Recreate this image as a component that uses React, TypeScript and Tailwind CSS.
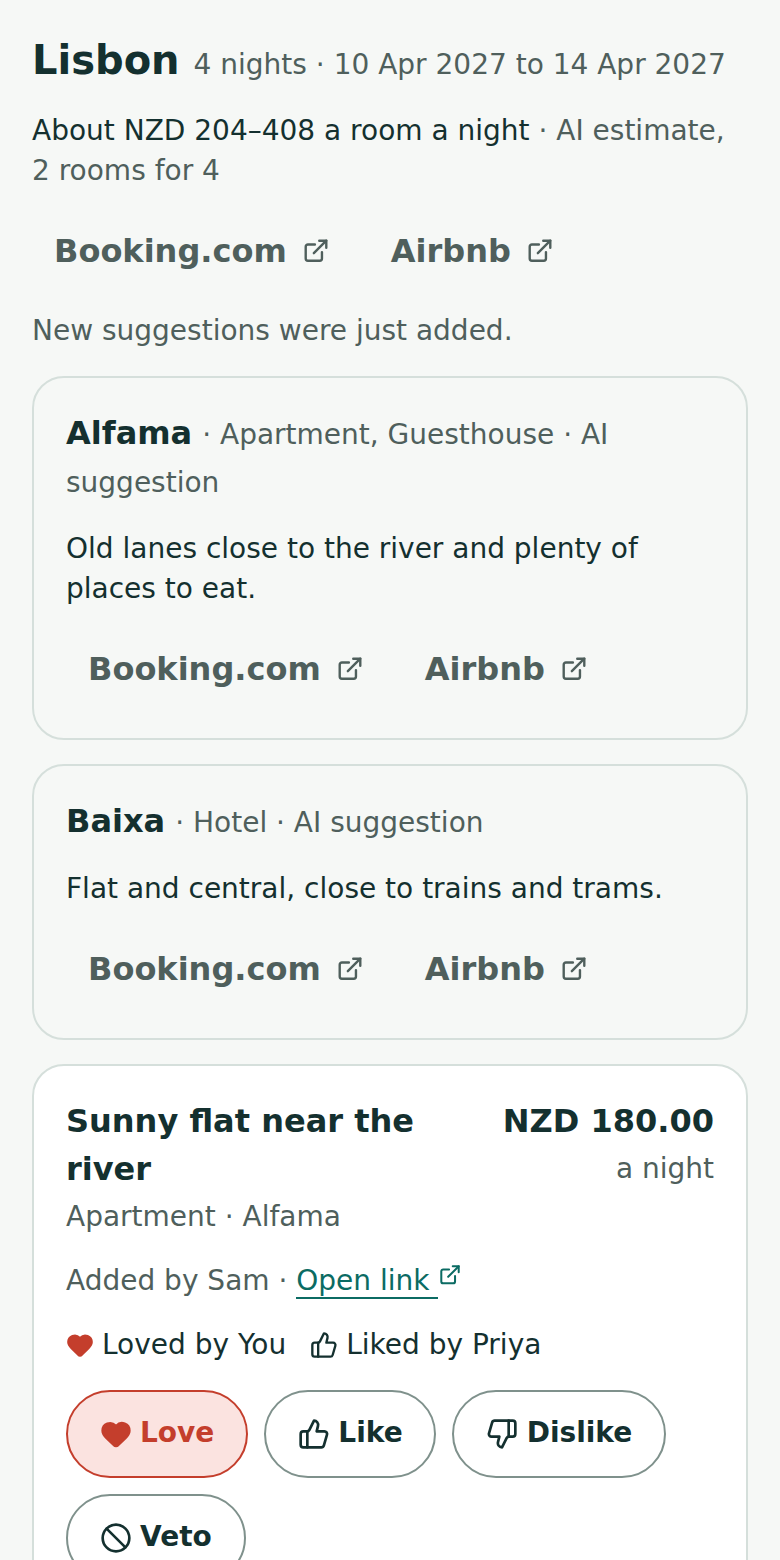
import { Ban, Heart, ThumbsDown, ThumbsUp } from 'lucide-react'

function ExternalIcon({ className }: { className: string }): JSX.Element {
  return (
    <svg className={className} viewBox="0 0 24 24" fill="none" stroke="currentColor" strokeWidth={2.2} strokeLinecap="round" strokeLinejoin="round">
      <path d="M17.5 13v6a2 2 0 0 1-2 2h-11a2 2 0 0 1-2-2V8a2 2 0 0 1 2-2H11" />
      <path d="M15 2.5h6.5V9" />
      <path d="M10 14 21.5 2.5" />
    </svg>
  )
}

function BookingLinks(): JSX.Element {
  return (
    <div className="flex gap-[18px]">
      <a className="flex items-center gap-[16px] h-[60px] px-[22px] text-[32px] font-bold text-[#4f5f5c]">
        Booking.com
        <ExternalIcon className="w-[26px] h-[26px]" />
      </a>
      <a className="flex items-center gap-[16px] h-[60px] px-[22px] text-[32px] font-bold text-[#4f5f5c]">
        Airbnb
        <ExternalIcon className="w-[26px] h-[26px]" />
      </a>
    </div>
  )
}

function Suggestion({ name, meta, text }: { name: string; meta: string; text: string }): JSX.Element {
  return (
    <div className="border-2 border-[#d5dfdb] rounded-[32px] px-[32px] pt-[31px] pb-[39px]">
      <p className="text-[28px] leading-[48px] text-[#4f5f5c]">
        <span className="text-[32px] font-bold text-[#14302f] mr-[10px]">{name}</span>
        {meta}
      </p>
      <p className="mt-[22px] text-[28px] leading-[40px] text-[#14302f]">{text}</p>
      <div className="mt-[30px]">
        <BookingLinks />
      </div>
    </div>
  )
}

export default function App(): JSX.Element {
  return (
    <div className="h-[1560px] overflow-hidden bg-[#f6f8f6] px-[32px] pt-[32px] font-['DejaVu_Sans',sans-serif]">
      <div className="flex items-baseline gap-[14px]">
        <h1 className="text-[40px] leading-[56px] font-bold text-[#14302f]">Lisbon</h1>
        <span className="text-[28px] text-[#4f5f5c]">4 nights · 10 Apr 2027 to 14 Apr 2027</span>
      </div>
      <p className="mt-[23px] text-[28px] leading-[40px] text-[#4f5f5c]">
        <span className="text-[#14302f]">About NZD 204–408 a room a night</span> · AI estimate, 2 rooms for 4
      </p>
      <div className="mt-[30px]">
        <BookingLinks />
      </div>
      <p className="mt-[30px] text-[28px] leading-[40px] text-[#4f5f5c]">New suggestions were just added.</p>
      <div className="mt-[25px] flex flex-col gap-[24px]">
        <Suggestion name="Alfama" meta="· Apartment, Guesthouse · AI suggestion" text="Old lanes close to the river and plenty of places to eat." />
        <Suggestion name="Baixa" meta="· Hotel · AI suggestion" text="Flat and central, close to trains and trams." />
        <div className="border-2 border-[#d5dfdb] rounded-[32px] bg-white px-[32px] pt-[31px] pb-[32px]">
          <div className="flex justify-between gap-[24px]">
            <div>
              <h2 className="text-[32px] leading-[48px] font-bold text-[#14302f]">Sunny flat near the river</h2>
              <p className="text-[28px] leading-[48px] text-[#4f5f5c]">Apartment · Alfama</p>
            </div>
            <div className="shrink-0 text-right">
              <p className="text-[32px] leading-[48px] font-bold text-[#14302f]">NZD 180.00</p>
              <p className="text-[28px] leading-[48px] text-[#4f5f5c]">a night</p>
            </div>
          </div>
          <p className="mt-[16px] text-[28px] leading-[48px] text-[#4f5f5c]">
            Added by Sam ·{' '}
            <a className="text-[#0b6b63]">
              <span className="border-b-2 border-[#0b6b63]">Open link&nbsp;</span>
              <ExternalIcon className="inline w-[22px] h-[22px] align-[4px] ml-[1px]" />
            </a>
          </p>
          <div className="mt-[16px] flex items-center gap-[24px] text-[28px] leading-[48px] text-[#14302f]">
            <span className="flex items-center gap-[8px]">
              <Heart className="w-[28px] h-[28px] text-[#c43e2c] fill-[#c43e2c]" />
              Loved by You
            </span>
            <span className="flex items-center gap-[8px]">
              <ThumbsUp className="w-[28px] h-[28px]" />
              Liked by Priya
            </span>
          </div>
          <div className="mt-[21px] flex flex-wrap gap-[16px]">
            <button className="flex items-center gap-[8px] h-[88px] px-[32px] rounded-full border-2 border-[#c43e2c] bg-[#fbe3e0] text-[28px] font-bold text-[#c43e2c]">
              <Heart className="w-[32px] h-[32px] fill-[#c43e2c]" />
              <span className="pb-[2px]">Love</span>
            </button>
            <button className="flex items-center gap-[8px] h-[88px] pl-[32px] pr-[31px] rounded-full border-2 border-[#7f918c] text-[28px] font-bold text-[#14302f]">
              <ThumbsUp className="w-[32px] h-[32px]" />
              <span className="pb-[2px]">Like</span>
            </button>
            <button className="flex items-center gap-[9px] h-[88px] px-[32px] rounded-full border-2 border-[#7f918c] text-[28px] font-bold text-[#14302f]">
              <ThumbsDown className="w-[32px] h-[32px]" />
              <span className="pb-[2px]">Dislike</span>
            </button>
            <button className="flex items-center gap-[8px] h-[88px] px-[32px] rounded-full border-2 border-[#7f918c] text-[28px] font-bold text-[#14302f]">
              <Ban className="w-[32px] h-[32px]" />
              <span className="pb-[2px]">Veto</span>
            </button>
          </div>
        </div>
      </div>
    </div>
  )
}
